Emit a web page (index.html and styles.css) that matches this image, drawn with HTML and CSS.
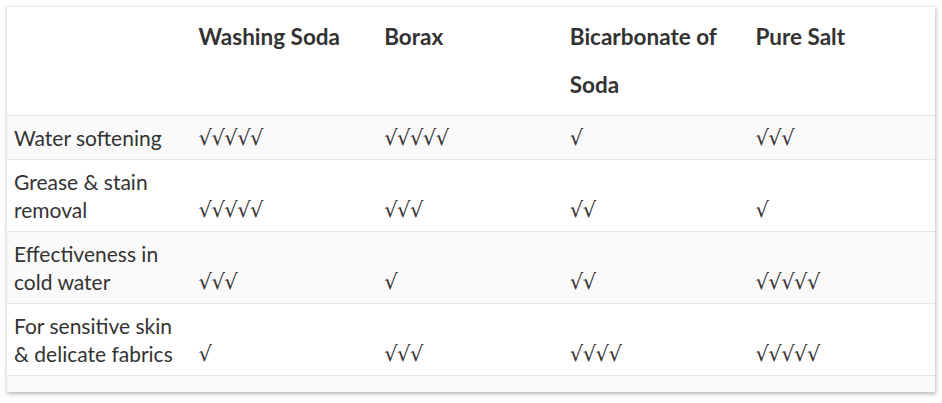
FILE: index.html
```html
<!DOCTYPE html>
<html>
<head>
<meta charset="utf-8">
<link rel="stylesheet" href="styles.css">
</head>
<body>
<div class="wrap">
  <div class="card">
    <table class="compare">
      <thead>
        <tr>
          <th></th>
          <th>Washing Soda</th>
          <th>Borax</th>
          <th>Bicarbonate of Soda</th>
          <th>Pure Salt</th>
        </tr>
      </thead>
      <tbody>
        <tr>
          <td>Water softening</td>
          <td class="chk">√√√√√</td>
          <td class="chk">√√√√√</td>
          <td class="chk">√</td>
          <td class="chk">√√√</td>
        </tr>
        <tr>
          <td>Grease &amp; stain removal</td>
          <td class="chk">√√√√√</td>
          <td class="chk">√√√</td>
          <td class="chk">√√</td>
          <td class="chk">√</td>
        </tr>
        <tr>
          <td>Effectiveness in cold water</td>
          <td class="chk">√√√</td>
          <td class="chk">√</td>
          <td class="chk">√√</td>
          <td class="chk">√√√√√</td>
        </tr>
        <tr>
          <td>For sensitive skin &amp; delicate fabrics</td>
          <td class="chk">√</td>
          <td class="chk">√√√</td>
          <td class="chk">√√√√</td>
          <td class="chk">√√√√√</td>
        </tr>
        <tr class="spacer">
          <td></td><td></td><td></td><td></td><td></td>
        </tr>
      </tbody>
    </table>
  </div>
</div>
</body>
</html>
```
FILE: styles.css
```css
html, body {
  margin: 0;
  padding: 0;
  background: #ffffff;
}

.wrap {
  padding: 6px 8px 10px 6px;
}

.card {
  width: 928px;
  background: #ffffff;
  border-top: 1px solid #ececec;
  border-left: 1px solid #e6e6e6;
  box-shadow: 1px 2px 4px rgba(0, 0, 0, 0.28);
}

.compare {
  width: 100%;
  border-collapse: collapse;
  table-layout: fixed;
  font-family: "Lato", "Open Sans", sans-serif;
  color: #333333;
}

.compare th {
  font-size: 22.5px;
  font-weight: 700;
  line-height: 48px;
  text-align: left;
  vertical-align: top;
  padding: 6px 8px 6px 6px;
  border-bottom: 1px solid #e6e6e6;
}

.compare td {
  font-size: 21px;
  font-weight: 400;
  line-height: 28px;
  vertical-align: bottom;
  padding: 8px 8px 7px 7px;
  border-bottom: 1px solid #e6e6e6;
}

.compare td.chk {
  font-family: "DejaVu Serif", serif;
  font-size: 21px;
  letter-spacing: -0.5px;
  padding-left: 6px;
}

.compare tbody tr:nth-child(odd) {
  background: #fafafa;
}

.compare tr.spacer td {
  padding: 0;
  height: 16px;
  border-bottom: none;
}
```
